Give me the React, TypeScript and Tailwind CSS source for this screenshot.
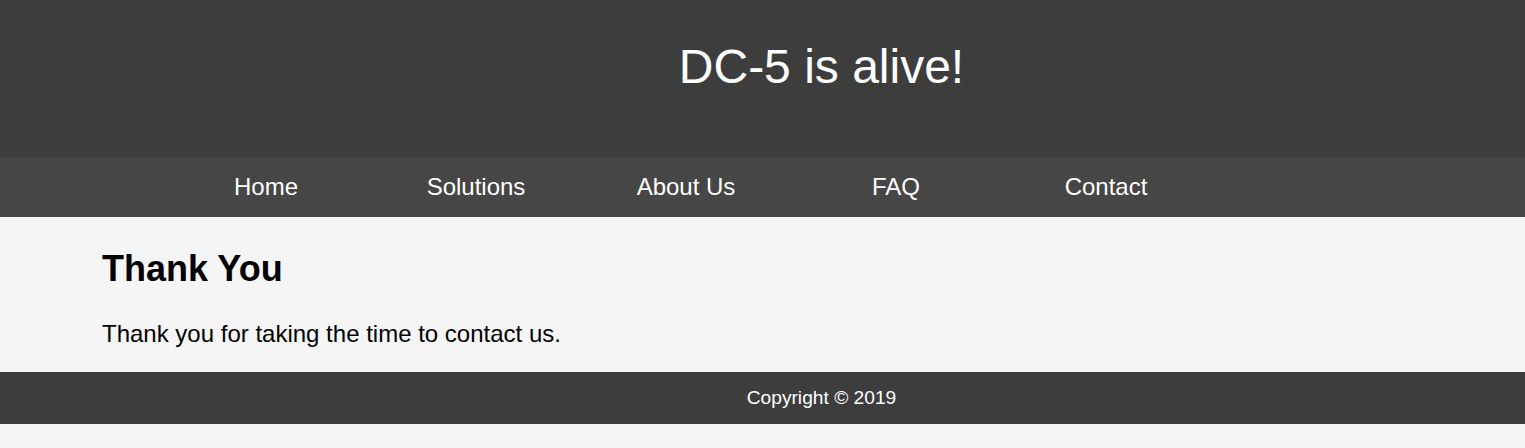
import React from "react";

export default function App() {
  const items = ["Home", "Solutions", "About Us", "FAQ", "Contact"];
  return (
    <div className="min-h-[448px] bg-[#f5f5f5] font-['Liberation_Sans',Arial,sans-serif]">
      <header className="h-[157px] bg-[#3d3d3d] pl-[118px]">
        <h1 className="pt-[43px] text-center text-[48px] leading-[48px] font-normal text-white">
          DC-5 is alive!
        </h1>
      </header>
      <nav className="flex h-[60px] items-center bg-[#464646] pl-[161px]">
        {items.map((it) => (
          <a key={it} className="w-[210px] text-center text-[24px] leading-[24px] text-white">
            {it}
          </a>
        ))}
      </nav>
      <main className="h-[155px] px-[102px] pt-[34px] text-black">
        <h2 className="text-[36px] leading-[36px] font-bold">Thank You</h2>
        <p className="mt-[35px] text-[24px] leading-[24px]">
          Thank you for taking the time to contact us.
        </p>
      </main>
      <footer className="flex h-[52px] items-center justify-center bg-[#3d3d3d] pl-[118px] text-[19.2px] text-white">
        Copyright © 2019
      </footer>
    </div>
  );
}
